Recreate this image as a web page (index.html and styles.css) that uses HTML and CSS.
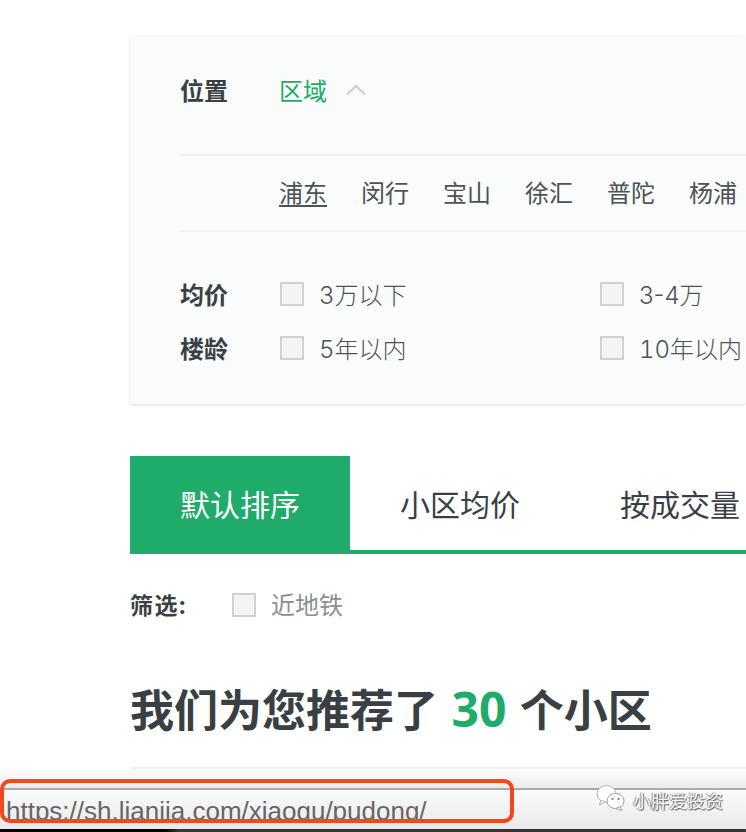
FILE: index.html
```html
<!DOCTYPE html>
<html>
<head>
  <title>小区</title>
  <link rel="stylesheet" href="styles.css">
</head>
<body>
  <div class="page">
    <div class="filter-card">
      <div class="row-location">
        <span class="row-label">位置</span>
        <a class="area-link">区域</a>
        <svg class="chevron" width="22" height="12" viewBox="0 0 22 12">
          <polyline points="2,10.5 11,2 20,10.5" fill="none" stroke="#cfd2d2" stroke-width="2.4"/>
        </svg>
      </div>
      <div class="row-districts">
        <a class="district current">浦东</a>
        <a class="district">闵行</a>
        <a class="district">宝山</a>
        <a class="district">徐汇</a>
        <a class="district">普陀</a>
        <a class="district">杨浦</a>
      </div>
      <div class="row-options first">
        <span class="row-label">均价</span>
        <div class="option"><span class="check"></span><span class="option-text">3万以下</span></div>
        <div class="option"><span class="check"></span><span class="option-text range">3-4万</span></div>
      </div>
      <div class="row-options">
        <span class="row-label">楼龄</span>
        <div class="option"><span class="check"></span><span class="option-text">5年以内</span></div>
        <div class="option"><span class="check"></span><span class="option-text">10年以内</span></div>
      </div>
    </div>

    <div class="tabs">
      <a class="tab active">默认排序</a>
      <a class="tab">小区均价</a>
      <a class="tab last">按成交量</a>
    </div>

    <div class="subway-filter">
      <span class="subway-label">筛选:</span>
      <span class="check"></span>
      <span class="subway-text">近地铁</span>
    </div>

    <h2 class="result-title">我们为您推荐了 <span class="count">30</span> 个小区</h2>
  </div>

  <div class="status-bar">
    <div class="status-shade"></div>
    <div class="status-main">
      <div class="status-url">https://sh.lianjia.com/xiaogu/pudong/</div>
      <div class="watermark">
        <svg width="30" height="28" viewBox="0 0 30 28">
          <ellipse cx="10.5" cy="10" rx="9.5" ry="8.5" fill="#fff" stroke="#b5b5b5" stroke-width="1"/>
          <path d="M5 16 L3.5 21 L9 18 Z" fill="#fff" stroke="#b5b5b5" stroke-width="1"/>
          <ellipse cx="19.5" cy="17" rx="8.5" ry="7.5" fill="#fff" stroke="#a0a0a0" stroke-width="1"/>
          <path d="M24 22.5 L26 26.5 L20 24.5 Z" fill="#fff" stroke="#a0a0a0" stroke-width="1"/>
          <circle cx="16.5" cy="15" r="1.1" fill="#777"/>
          <circle cx="22.5" cy="15" r="1.1" fill="#777"/>
        </svg>
        <span class="watermark-text">小胖爱投资</span>
      </div>
    </div>
    <div class="status-edge"></div>
  </div>
  <div class="url-highlight"></div>
</body>
</html>
```

FILE: styles.css
```css
html, body {
  margin: 0;
  height: 832px;
  overflow: hidden;
  background-color: white;
  font-family: "Noto Sans", "Noto Sans CJK SC", sans-serif;
}
.page {
  width: 746px;
  height: 832px;
  padding: 36px 0 0 130px;
  box-sizing: border-box;
  overflow: hidden;
}

/* Filter card */
.filter-card {
  height: 368px;
  padding-left: 50px;
  background-color: #fafbfb;
  border-radius: 3px;
  box-shadow: 0 1px 3px rgba(0, 0, 0, 0.14);
  box-sizing: border-box;
}
.row-location {
  display: flex;
  align-items: center;
  height: 120px;
  padding-bottom: 12px;
  box-sizing: border-box;
  border-bottom: 2px solid #f1f2f2;
}
.row-label {
  width: 100px;
  flex-shrink: 0;
  font-size: 24px;
  font-weight: bold;
  color: #394043;
}
.row-location .row-label {
  width: 99px;
}
.area-link {
  font-size: 24px;
  color: #1fab6a;
}
.chevron {
  margin-left: 18px;
  margin-top: 1px;
}
.row-districts {
  display: flex;
  gap: 34px;
  align-items: center;
  height: 76px;
  padding-left: 99px;
  padding-bottom: 3px;
  box-sizing: border-box;
  border-bottom: 2px solid #f1f2f2;
}
.district {
  font-size: 24px;
  color: #4c5255;
}
.district.current {
  text-decoration: underline;
  text-underline-offset: 3px;
}
.row-options {
  display: flex;
  align-items: center;
  height: 54px;
}
.row-options.first {
  margin-top: 36px;
}
.row-options .row-label {
  margin-top: -3px;
}
.option {
  display: flex;
  align-items: center;
  width: 320px;
  flex-shrink: 0;
}
.option:last-child {
  width: auto;
}
.option-text {
  font-family: Inter, "Noto Sans CJK SC", sans-serif;
  font-size: 24px;
  font-weight: 300;
  font-variant-numeric: tabular-nums;
  color: #4c5255;
  margin-top: -4px;
  margin-left: -1px;
}
.option-text.range {
  font-variant-numeric: normal;
}
.check {
  width: 24px;
  height: 24px;
  margin-right: 16px;
  margin-top: -2px;
  flex-shrink: 0;
  box-sizing: border-box;
  background-color: #f3f5f5;
  border: 2px solid #cdd2d3;
}

/* Sort tabs */
.tabs {
  display: flex;
  height: 98px;
  margin-top: 52px;
  box-sizing: border-box;
  border-bottom: 4px solid #1fab6a;
}
.tab {
  width: 220px;
  height: 98px;
  box-sizing: border-box;
  padding-left: 50px;
  line-height: 98px;
  font-size: 30px;
  color: #394043;
}
.tab.active {
  background-color: #1fab6a;
  color: white;
}
.tab.last {
  width: 176px;
}

.subway-filter {
  display: flex;
  align-items: center;
  height: 32px;
  margin-top: 35px;
}
.subway-label {
  width: 102px;
  font-size: 23px;
  font-weight: bold;
  letter-spacing: 1.5px;
  color: #394043;
  margin-top: -3px;
}
.subway-filter .check {
  margin-right: 15px;
  margin-top: 0;
}
.subway-text {
  font-size: 24px;
  color: #8a8f91;
  margin-top: -3px;
}

.result-title {
  margin: 0;
  padding: 57px 0 25px;
  line-height: 64px;
  font-size: 44px;
  font-weight: bold;
  color: #394043;
  border-bottom: 2px solid #f0f0f0;
  white-space: nowrap;
}
.count {
  margin: 0 2px;
  font-size: 48px;
  line-height: 48px;
  color: #1fab6a;
}

/* Browser status bar at the bottom of the shot */
.status-bar {
  position: absolute;
  left: 0;
  right: 0;
  bottom: 0;
  height: 63px;
  display: flex;
  flex-direction: column;
}
.status-shade {
  height: 19px;
  background: linear-gradient(#fdfdfd, #ececec);
  border-bottom: 2px solid #a9a9a9;
}
.status-main {
  flex: 1;
  display: flex;
  justify-content: space-between;
  background: linear-gradient(#fbfbfb, #e9e9e9);
}
.status-url {
  height: 32px;
  padding: 0 0 0 6px;
  overflow: hidden;
  font-family: "Liberation Sans", sans-serif;
  font-size: 26px;
  line-height: 42px;
  color: #666;
  white-space: nowrap;
}
.watermark {
  display: flex;
  align-items: flex-start;
  gap: 7px;
  padding-right: 23px;
}
.watermark svg {
  margin-top: -6px;
}
.watermark-text {
  font-size: 18px;
  line-height: 22px;
  color: #f7f7f7;
  text-shadow: 1px 1px 1px #555, -1px 0 1px #888;
}
.status-edge {
  height: 3px;
  background: linear-gradient(90deg, #000 22%, #37353a 24%);
}
.url-highlight {
  position: absolute;
  left: 0;
  top: 779px;
  width: 514px;
  height: 44px;
  box-sizing: border-box;
  border: 4px solid #f4471f;
  border-radius: 10px;
}
```
